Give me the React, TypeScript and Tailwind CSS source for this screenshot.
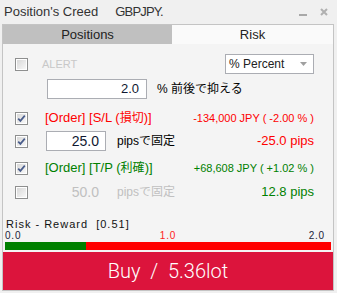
import React from "react";

function Check({ checked }: { checked?: boolean }) {
  return (
    <div className="w-[13px] h-[13px] border border-[#8e8f8f] bg-white p-[1px] shrink-0">
      <div className="w-full h-full bg-linear-to-br from-[#d8d8d8] to-[#f8f8f8] flex items-center justify-center">
        {checked && (
          <svg width="9" height="9" viewBox="0 0 9 9">
            <path d="M1.2 4.6 L3.4 6.9 L7.8 1.6" fill="none" stroke="#4a5d8c" strokeWidth="1.7" />
          </svg>
        )}
      </div>
    </div>
  );
}

export default function App() {
  return (
    <div className="w-[337px] h-[293px] bg-[#f0f0f0] flex flex-col overflow-hidden [font-family:'Liberation_Sans','Noto_Sans_CJK_JP',sans-serif] text-black">
      {/* title bar */}
      <div className="h-[24px] flex items-center pl-[4px] text-[13px] text-[#333] shrink-0">
        <span>Position's Creed</span>
        <span className="ml-[17px] tracking-[-0.8px]">GBPJPY.</span>
        <div className="ml-auto flex items-center mr-[9px]">
          <div className="w-[8px] h-[2px] bg-[#a8a8a8] mt-[6px]" />
          <svg width="8" height="8" viewBox="0 0 8 8" className="ml-[13px]">
            <path d="M1 1 L7 7 M7 1 L1 7" stroke="#b0b0b0" strokeWidth="2" />
          </svg>
        </div>
      </div>

      {/* panel */}
      <div className="ml-[2px] w-[332px] h-[267px] border border-[#c4c4c4] flex flex-col bg-[#f4f4f4] shrink-0">
        {/* tabs */}
        <div className="h-[19px] flex text-[13px] shrink-0">
          <div className="w-[169px] bg-[#c0c0c0] flex items-center justify-center text-[#222]">Positions</div>
          <div className="flex-1 bg-[#fafafa] flex items-center justify-center text-[#222]">Risk</div>
        </div>

        {/* content */}
        <div className="flex flex-col flex-1">
          {/* ALERT row */}
          <div className="mt-[10px] h-[20px] flex items-center pl-[12px] pr-[19px]">
            <Check />
            <span className="ml-[14px] text-[11px] text-[#c8c8c8]">ALERT</span>
            <div className="ml-auto w-[89px] h-[20px] border border-[#abadb3] bg-white flex items-center pl-[3px] pr-[6px] text-[12px] text-[#222]">
              <span>% Percent</span>
              <svg width="7" height="4" viewBox="0 0 7 4" className="ml-auto">
                <path d="M0 0 L7 0 L3.5 4 Z" fill="#a0a0a0" />
              </svg>
            </div>
          </div>

          {/* 2.0 row */}
          <div className="mt-[5px] h-[20px] flex items-center pl-[44px]">
            <div className="w-[100px] h-[20px] border border-[#abadb3] bg-white flex items-center justify-end pr-[7px] text-[13px] text-[#101830]">2.0</div>
            <span className="ml-[10px] text-[12px]">% 前後で抑える</span>
          </div>

          {/* S/L row */}
          <div className="mt-[9px] h-[20px] flex items-center pl-[12px] pr-[19px]">
            <Check checked />
            <span className="ml-[17px] text-[13px] text-[#ff0000]">
              [Order] [S/L (<span className="text-[12px]">損切</span>)]
            </span>
            <span className="ml-auto text-[11px] text-[#ff0000]">-134,000 JPY ( -2.00 % )</span>
          </div>

          {/* 25.0 row */}
          <div className="mt-[3px] h-[20px] flex items-center pl-[12px] pr-[19px]">
            <Check checked />
            <div className="ml-[18px] w-[60px] h-[20px] border border-[#abadb3] bg-white flex items-center justify-end pr-[6px] text-[14px] text-[#101830]">25.0</div>
            <span className="ml-[11px] text-[12px]">pipsで固定</span>
            <span className="ml-auto text-[13px] text-[#ff0000]">-25.0 pips</span>
          </div>

          {/* T/P row */}
          <div className="mt-[7px] h-[20px] flex items-center pl-[12px] pr-[19px]">
            <Check checked />
            <span className="ml-[17px] text-[13px] text-[#008000]">
              [Order] [T/P (<span className="text-[12px]">利確</span>)]
            </span>
            <span className="ml-auto text-[11px] text-[#008000]">+68,608 JPY ( +1.02 % )</span>
          </div>

          {/* 50.0 row */}
          <div className="mt-[4px] h-[20px] flex items-center pl-[12px] pr-[19px]">
            <Check />
            <div className="ml-[18px] w-[60px] h-[20px] flex items-center justify-end pr-[7px] text-[14px] text-[#c0c0c0]">50.0</div>
            <span className="ml-[11px] text-[12px] text-[#c0c0c0]">pipsで固定</span>
            <span className="ml-auto text-[13px] text-[#008000]">12.8 pips</span>
          </div>

          {/* Risk reward */}
          <div className="mt-[16px] h-[12px] leading-[12px] pl-[3px] text-[11px] tracking-[1px] text-[#111] whitespace-pre">
            Risk - Reward  [0.51]
          </div>
          <div className="mt-[1px] h-[10px] mx-[2px] grid grid-cols-3 text-[10px] leading-[10px] tracking-[0.8px] text-[#1a2238]">
            <span className="text-left">0.0</span>
            <span className="text-center text-[#ff2020]">1.0</span>
            <span className="text-right mr-[6px]">2.0</span>
          </div>
          <div className="mt-[1px] h-[8px] mx-[2px] flex">
            <div className="w-[81px] bg-[#008000]" />
            <div className="flex-1 bg-[#ff0000]" />
          </div>
          <div className="mt-[2px] h-[38px] bg-[#dc143c] flex items-center justify-center text-white text-[20px] font-light [font-family:Roboto,'Liberation_Sans',sans-serif] whitespace-pre">
            Buy  /  5.36lot
          </div>
        </div>
      </div>
    </div>
  );
}
